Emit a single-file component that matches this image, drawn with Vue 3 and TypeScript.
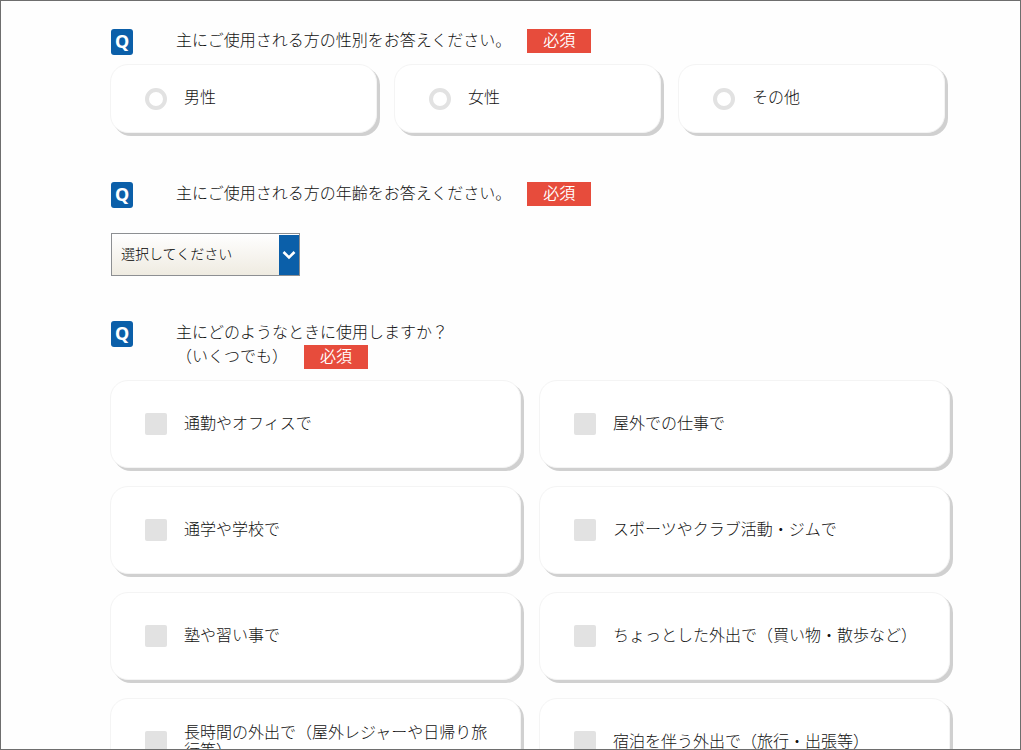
<script setup lang="ts">
import { ref } from 'vue'

interface Option {
  value: string
  label: string
}

const genders: Option[] = [
  { value: 'male', label: '男性' },
  { value: 'female', label: '女性' },
  { value: 'other', label: 'その他' },
]

const ages: string[] = ['10代', '20代', '30代', '40代', '50代', '60代以上']

const scenes: Option[] = [
  { value: 'commute', label: '通勤やオフィスで' },
  { value: 'outdoor-work', label: '屋外での仕事で' },
  { value: 'school', label: '通学や学校で' },
  { value: 'sports', label: 'スポーツやクラブ活動・ジムで' },
  { value: 'lessons', label: '塾や習い事で' },
  { value: 'short-trip', label: 'ちょっとした外出で（買い物・散歩など）' },
  { value: 'long-trip', label: '長時間の外出で（屋外レジャーや日帰り旅行等）' },
  { value: 'stay', label: '宿泊を伴う外出で（旅行・出張等）' },
]

const gender = ref<string>('')
const age = ref<string>('')
const selectedScenes = ref<string[]>([])
</script>

<template>
  <main class="page">
    <form class="survey" @submit.prevent>
      <section class="question" role="group" aria-labelledby="q-gender">
        <header class="head">
          <span class="mark">Q</span>
          <h2 id="q-gender" class="title">
            主にご使用される方の性別をお答えください。<span class="required">必須</span>
          </h2>
        </header>
        <div class="options three">
          <label v-for="g in genders" :key="g.value" class="card">
            <input v-model="gender" class="radio" type="radio" name="gender" :value="g.value" />
            <span class="text">{{ g.label }}</span>
          </label>
        </div>
      </section>

      <section class="question">
        <header class="head">
          <span class="mark">Q</span>
          <h2 class="title">
            <label for="age">主にご使用される方の年齢をお答えください。</label><span class="required">必須</span>
          </h2>
        </header>
        <div class="picker">
          <select id="age" v-model="age" class="select">
            <option value="">選択してください</option>
            <option v-for="a in ages" :key="a" :value="a">{{ a }}</option>
          </select>
          <span class="arrow">
            <svg width="14" height="10" viewBox="0 0 14 10" aria-hidden="true">
              <path d="M1.5 2 L7 7.5 L12.5 2" fill="none" stroke="#fff" stroke-width="2.6" />
            </svg>
          </span>
        </div>
      </section>

      <section class="question" role="group" aria-labelledby="q-scene">
        <header class="head">
          <span class="mark">Q</span>
          <h2 id="q-scene" class="title">
            主にどのようなときに使用しますか？<br />（いくつでも）<span class="required">必須</span>
          </h2>
        </header>
        <div class="options two">
          <label v-for="s in scenes" :key="s.value" class="card tall">
            <input v-model="selectedScenes" class="check" type="checkbox" :value="s.value" />
            <span class="text">{{ s.label }}</span>
          </label>
        </div>
      </section>
    </form>
  </main>
</template>

<style>
body {
  margin: 0;
}
</style>

<style scoped>
.page {
  box-sizing: border-box;
  height: 100vh;
  overflow: hidden;
  border: 1px solid #6e6e6e;
  background: #fefefe;
  color: #111;
  font-family: "Noto Sans CJK JP", sans-serif;
  font-size: 16px;
  font-weight: 300;
  line-height: 24px;
}
.survey {
  padding: 28px 70px 0 109px;
}
.question {
  margin-bottom: 49px;
}
.question:nth-child(2) {
  margin-bottom: 45px;
}
.head {
  display: flex;
  align-items: flex-start;
  gap: 43px;
  margin-bottom: 11px;
  padding-left: 1px;
}
.mark {
  width: 22px;
  height: 26px;
  margin-bottom: -2px;
  border-radius: 3px;
  background: #0b5fa9;
  color: #fff;
  font-family: "Noto Sans", sans-serif;
  font-size: 18px;
  font-weight: 700;
  line-height: 24px;
  text-align: center;
}
.title {
  margin: -2px 0 0;
  font-size: 16px;
  font-weight: inherit;
  line-height: 24px;
}
.required {
  display: inline-block;
  height: 24px;
  margin: 2px 0 0 16px;
  padding: 0 16px;
  background: #e74c3c;
  color: #fff;
  font-weight: 350;
  line-height: 20px;
  vertical-align: top;
}
.options {
  display: grid;
}
.three {
  grid-template-columns: repeat(3, 1fr);
  gap: 17px;
  padding-right: 5px;
}
.two {
  grid-template-columns: repeat(2, 1fr);
  gap: 18px;
}
.card {
  box-sizing: border-box;
  display: flex;
  align-items: center;
  gap: 17px;
  min-height: 69px;
  padding: 0 24px 0 34px;
  border: 1px solid #f4f4f4;
  border-radius: 18px;
  background: #fff;
  box-shadow: 3px 3px 0 #d0d0d0;
  line-height: 18px;
}
.text {
  padding-bottom: 6px;
}
.tall {
  min-height: 88px;
}
.tall .text {
  padding-bottom: 4px;
}
.radio,
.check {
  appearance: none;
  box-sizing: border-box;
  flex: none;
  width: 22px;
  height: 22px;
  margin: 0;
}
.radio {
  border: 4px solid #e2e2e2;
  border-radius: 50%;
  background: #fff;
}
.radio:checked {
  border-color: #0b5fa9;
}
.check {
  border-radius: 2px;
  background: #e2e2e2;
}
.check:checked {
  background: #0b5fa9;
}
.picker {
  position: relative;
  width: 189px;
  margin: 27px 0 0 1px;
}
.select {
  appearance: none;
  display: block;
  box-sizing: border-box;
  width: 100%;
  height: 43px;
  margin: 0;
  padding: 0 30px 4px 9px;
  border: 1px solid #8d8f92;
  border-radius: 0;
  background: linear-gradient(#fff, #efebe1);
  color: #000;
  font-family: inherit;
  font-size: 14px;
  font-weight: inherit;
}
.arrow {
  position: absolute;
  top: 2px;
  right: 1px;
  bottom: 1px;
  display: flex;
  align-items: center;
  justify-content: center;
  width: 20px;
  background: #0b5fa9;
  pointer-events: none;
}
</style>
